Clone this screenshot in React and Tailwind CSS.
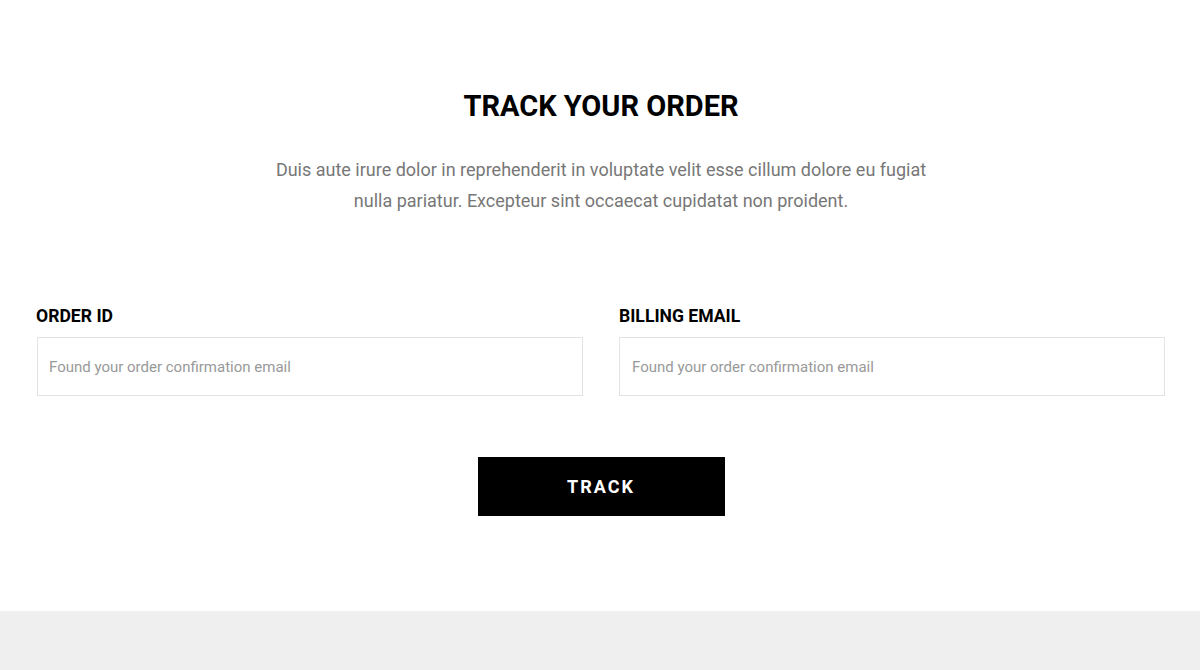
import React from 'react';

export default function App() {
  return (
    <div className="min-h-[670px] bg-white flex flex-col" style={{ fontFamily: 'Roboto, "Liberation Sans", sans-serif' }}>
      <div className="pl-[37px] pr-[35px] pt-[88px] pb-[95px]">
        <h2 className="text-center text-[29px] leading-[36px] font-bold text-black">TRACK YOUR ORDER</h2>
        <p className="mx-auto mt-[30px] w-[670px] text-center text-[18px] leading-[31px] text-[#777]">
          Duis aute irure dolor in reprehenderit in voluptate velit esse cillum dolore eu fugiat nulla pariatur. Excepteur sint occaecat cupidatat non proident.
        </p>

        <div className="mt-[88px] grid grid-cols-2 gap-x-[36px]">
          <div>
            <label className="block -ml-[1px] text-[17.6px] leading-[24px] font-bold text-black">ORDER ID</label>
            <input
              className="mt-[9px] block h-[59px] w-full border border-[#e3e3e3] px-[11px] text-[15px] text-[#333] outline-none placeholder:text-[#999]"
              placeholder="Found your order confirmation email"
            />
          </div>
          <div>
            <label className="block text-[17.6px] leading-[24px] font-bold text-black">BILLING EMAIL</label>
            <input
              className="mt-[9px] block h-[59px] w-full border border-[#e3e3e3] px-[12px] text-[15px] text-[#333] outline-none placeholder:text-[#999]"
              placeholder="Found your order confirmation email"
            />
          </div>
        </div>

        <div className="mt-[61px] flex justify-center">
          <button className="h-[59px] w-[247px] bg-black text-[18px] font-bold tracking-[2px] text-white">TRACK</button>
        </div>
      </div>
      <div className="flex-1 bg-[#efefef]" />
    </div>
  );
}
